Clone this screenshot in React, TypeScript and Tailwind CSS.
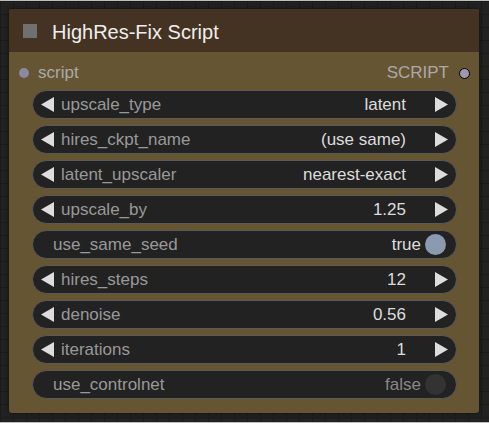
import React from 'react';

type Widget =
  | { kind: 'combo' | 'number'; name: string; value: string }
  | { kind: 'toggle'; name: string; on: boolean };

const widgets: Widget[] = [
  { kind: 'combo', name: 'upscale_type', value: 'latent' },
  { kind: 'combo', name: 'hires_ckpt_name', value: '(use same)' },
  { kind: 'combo', name: 'latent_upscaler', value: 'nearest-exact' },
  { kind: 'number', name: 'upscale_by', value: '1.25' },
  { kind: 'toggle', name: 'use_same_seed', on: true },
  { kind: 'number', name: 'hires_steps', value: '12' },
  { kind: 'number', name: 'denoise', value: '0.56' },
  { kind: 'number', name: 'iterations', value: '1' },
  { kind: 'toggle', name: 'use_controlnet', on: false },
];

function Arrow({ dir }: { dir: 'left' | 'right' }) {
  return (
    <svg width="14" height="15" viewBox="0 0 14 15" className="shrink-0">
      {dir === 'left' ? (
        <polygon points="13,0 13,15 0,7.5" fill="#dddddd" />
      ) : (
        <polygon points="1,0 1,15 14,7.5" fill="#dddddd" />
      )}
    </svg>
  );
}

function WidgetRow({ w }: { w: Widget }) {
  if (w.kind === 'toggle') {
    return (
      <div className="h-[29px] rounded-full border border-[#5a5a5a] bg-[#222] flex items-center pl-[20px] pr-[10px]">
        <span className="text-[#999] flex-1">{w.name}</span>
        <span className={w.on ? 'text-[#ddd]' : 'text-[#888]'}>{w.on ? 'true' : 'false'}</span>
        <span
          className={
            'ml-[4px] w-[21px] h-[21px] rounded-full ' + (w.on ? 'bg-[#8a9bb0]' : 'bg-[#333]')
          }
        />
      </div>
    );
  }
  return (
    <div className="h-[29px] rounded-full border border-[#5a5a5a] bg-[#222] flex items-center pl-[8px] pr-[8px]">
      <Arrow dir="left" />
      <span className="ml-[6px] text-[#999] flex-1">{w.name}</span>
      <span className="text-[#ddd] mr-[28px]">{w.value}</span>
      <Arrow dir="right" />
    </div>
  );
}

export default function App() {
  return (
    <div
      className="w-[489px] h-[423px] bg-[#222] border-t border-b border-[#bdbdbd] pt-[8px] pl-[9px] overflow-hidden bg-[linear-gradient(#1b1b1b_1px,transparent_1px),linear-gradient(90deg,#1b1b1b_1px,transparent_1px)] bg-[size:13px_13px]"
      style={{ fontFamily: '"Liberation Sans", Arial, sans-serif' }}
    >
      <div className="w-[470px] h-[404px] bg-[#665533] rounded-[3px] flex flex-col shadow-[0_0_4px_rgba(0,0,0,0.6)]">
        {/* Title */}
        <div className="h-[43px] bg-[#443322] rounded-t-[3px] flex items-center pl-[14px]">
          <span className="w-[14px] h-[14px] bg-[#707070]" />
          <span className="ml-[15px] text-[20px] leading-none mt-[2px] text-[#eee]">HighRes-Fix Script</span>
        </div>

        {/* Slots */}
        <div className="h-[38px] flex items-center pt-[4px] pl-[10px] pr-[9px] text-[17px]">
          <span className="w-[10px] h-[10px] rounded-full bg-[#8a8aa0]" />
          <span className="ml-[9px] text-[#aaa] flex-1">script</span>
          <span className="text-[#aaa]">SCRIPT</span>
          <span className="ml-[10px] w-[11px] h-[11px] rounded-full bg-[#9a9ab0] border-[1.5px] border-black" />
        </div>

        {/* Widgets */}
        <div className="flex flex-col gap-[6px] pl-[23px] pr-[22px] text-[17px]">
          {widgets.map((w) => (
            <WidgetRow key={w.name} w={w} />
          ))}
        </div>
      </div>
    </div>
  );
}
